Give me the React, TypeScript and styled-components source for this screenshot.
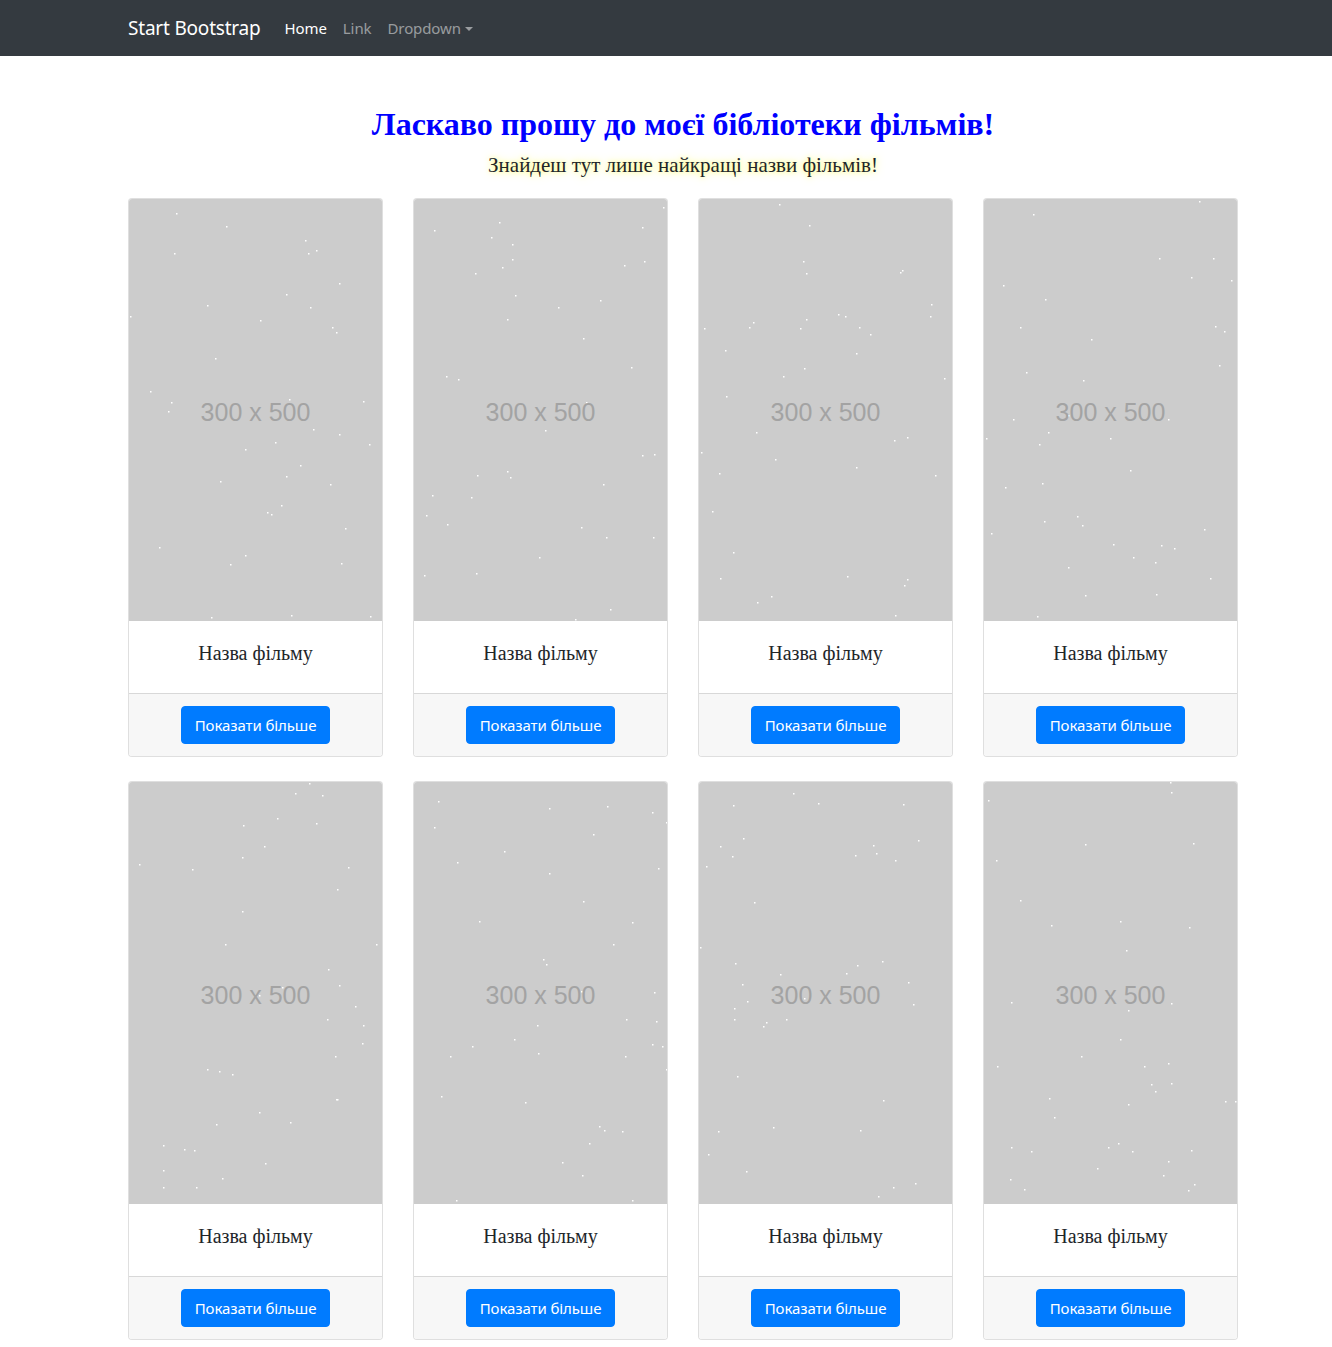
import React from "react";
import styled, { createGlobalStyle } from "styled-components";

const GlobalStyle = createGlobalStyle`
  html, body { margin: 0; padding: 0; background: #fff; }
  body {
    font-family: "Liberation Serif", "Times New Roman", serif;
    color: #212529;
  }
  * { box-sizing: border-box; }
`;

const NavBar = styled.nav`
  background: #343a40;
  height: 56px;
  display: flex;
  align-items: center;
`;

const Container = styled.div`
  width: 1110px;
  margin-left: 128px;
`;

const NavInner = styled(Container)`
  display: flex;
  align-items: center;
  font-family: "Noto Sans", "Open Sans", sans-serif;
`;

const Brand = styled.a`
  color: #fff;
  font-size: 19px;
  line-height: 30px;
  margin-right: 16px;
  text-decoration: none;
  letter-spacing: -0.2px;
`;

const NavLink = styled.a<{ $active?: boolean }>`
  color: ${(p) => (p.$active ? "#fff" : "rgba(255,255,255,0.5)")};
  font-size: 15px;
  line-height: 24px;
  padding: 8px;
  text-decoration: none;
  display: flex;
  align-items: center;
  letter-spacing: -0.1px;
`;

const Caret = styled.span`
  display: inline-block;
  margin-left: 4px;
  width: 0;
  height: 0;
  border-top: 4.8px solid rgba(255,255,255,0.5);
  border-left: 4px solid transparent;
  border-right: 4px solid transparent;
  margin-top: 1px;
`;

const Main = styled(Container)`
  padding-top: 49px;
`;

const Title = styled.h1`
  margin: 0 0 7px;
  text-align: center;
  color: #0000ff;
  font-size: 32px;
  font-weight: bold;
  line-height: 38px;
`;

const Subtitle = styled.p`
  margin: 0 0 18px;
  text-align: center;
  font-size: 21px;
  line-height: 30px;
  color: #212529;
  text-shadow: 0 0 9px #ffff70, 0 0 4px #fffbb0;
`;

const Grid = styled.div`
  display: grid;
  grid-template-columns: repeat(4, 255px);
  column-gap: 30px;
  row-gap: 24px;
`;

const Card = styled.div`
  border: 1px solid rgba(0,0,0,0.125);
  border-radius: 4px;
  overflow: hidden;
  display: flex;
  flex-direction: column;
  background: #fff;
`;

const Poster = styled.div`
  position: relative;
  height: 422px;
  background: #cccccc;
  display: flex;
  align-items: center;
  justify-content: center;
  font-family: "Liberation Sans", Arial, sans-serif;
  font-size: 25px;
  color: #a3a3a3;
`;

const Dots = styled.svg`
  position: absolute;
  inset: 0;
`;

const PosterLabel = styled.span`
  position: relative;
  margin-top: 5px;
`;

const CardBody = styled.div`
  padding: 20px 20px 28px;
  text-align: center;
`;

const CardTitle = styled.h5`
  margin: 0;
  font-size: 20px;
  line-height: 24px;
  font-weight: normal;
`;

const CardFooter = styled.div`
  border-top: 1px solid rgba(0,0,0,0.125);
  background: #f7f7f7;
  padding: 12px 20px;
  display: flex;
  justify-content: center;
`;

const Button = styled.button`
  background: #007bff;
  color: #fff;
  border: 1px solid #007bff;
  border-radius: 4px;
  padding: 6px 13px;
  font-family: "Noto Sans", "Open Sans", sans-serif;
  font-size: 15px;
  line-height: 24px;
  letter-spacing: -0.1px;
  cursor: pointer;
`;

function makeDots(seed: number) {
  let s = seed * 9301 + 49297;
  const rnd = () => {
    s = (s * 1103515245 + 12345) % 2147483648;
    return s / 2147483648;
  };
  const dots: { x: number; y: number }[] = [];
  for (let i = 0; i < 40; i++) {
    dots.push({ x: Math.floor(rnd() * 253), y: Math.floor(rnd() * 422) });
  }
  return dots;
}

const MovieCard: React.FC<{ idx: number }> = ({ idx }) => {
  const dots = React.useMemo(() => makeDots(idx + 3), [idx]);
  return (
    <Card>
      <Poster>
        <Dots width="253" height="422" viewBox="0 0 253 422">
          {dots.map((d, i) => (
            <rect key={i} x={d.x} y={d.y} width="1.5" height="1.5" fill="#fff" />
          ))}
        </Dots>
        <PosterLabel>300 x 500</PosterLabel>
      </Poster>
      <CardBody>
        <CardTitle>Назва фільму</CardTitle>
      </CardBody>
      <CardFooter>
        <Button>Показати більше</Button>
      </CardFooter>
    </Card>
  );
};

export default function App() {
  return (
    <>
      <GlobalStyle />
      <NavBar>
        <NavInner>
          <Brand href="#">Start Bootstrap</Brand>
          <NavLink $active href="#">Home</NavLink>
          <NavLink href="#">Link</NavLink>
          <NavLink href="#">
            Dropdown
            <Caret />
          </NavLink>
        </NavInner>
      </NavBar>
      <Main>
        <Title>Ласкаво прошу до моєї бібліотеки фільмів!</Title>
        <Subtitle>Знайдеш тут лише найкращі назви фільмів!</Subtitle>
        <Grid>
          {Array.from({ length: 8 }).map((_, i) => (
            <MovieCard key={i} idx={i} />
          ))}
        </Grid>
      </Main>
    </>
  );
}
